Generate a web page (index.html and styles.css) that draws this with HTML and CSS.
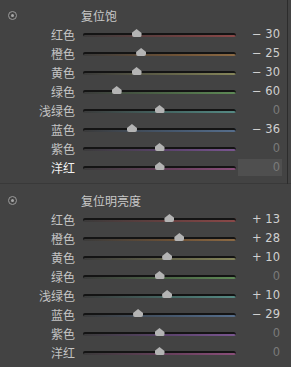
FILE: index.html
```html
<!DOCTYPE html>
<html lang="zh">
<head>
  <meta charset="UTF-8">
  <title>HSL</title>
  <link rel="stylesheet" href="styles.css">
</head>
<body>

<div class="panel">

  <!-- 饱和度 -->
  <div class="section">
    <div class="head">
      <span class="target"><b></b></span>
      <span class="title">复位饱</span>
    </div>
    <div class="row"><span class="label">红色</span><div class="track red"><i class="thumb" style="left:35%"></i></div><span class="val">− 30</span></div>
    <div class="row"><span class="label">橙色</span><div class="track orange"><i class="thumb" style="left:38%"></i></div><span class="val">− 25</span></div>
    <div class="row"><span class="label">黄色</span><div class="track yellow"><i class="thumb" style="left:35%"></i></div><span class="val">− 30</span></div>
    <div class="row"><span class="label">绿色</span><div class="track green"><i class="thumb" style="left:22%"></i></div><span class="val">− 60</span></div>
    <div class="row"><span class="label">浅绿色</span><div class="track aqua"><i class="thumb" style="left:50%"></i></div><span class="val zero">0</span></div>
    <div class="row"><span class="label">蓝色</span><div class="track blue"><i class="thumb" style="left:32%"></i></div><span class="val">− 36</span></div>
    <div class="row"><span class="label">紫色</span><div class="track purple"><i class="thumb" style="left:50%"></i></div><span class="val zero">0</span></div>
    <div class="row active"><span class="label">洋红</span><div class="track magenta"><i class="thumb" style="left:50%"></i></div><span class="val zero">0</span></div>
  </div>

  <!-- 明亮度 -->
  <div class="section">
    <div class="head">
      <span class="target"><b></b></span>
      <span class="title">复位明亮度</span>
    </div>
    <div class="row"><span class="label">红色</span><div class="track red"><i class="thumb" style="left:56.5%"></i></div><span class="val">+ 13</span></div>
    <div class="row"><span class="label">橙色</span><div class="track orange"><i class="thumb" style="left:63%"></i></div><span class="val">+ 28</span></div>
    <div class="row"><span class="label">黄色</span><div class="track yellow"><i class="thumb" style="left:55%"></i></div><span class="val">+ 10</span></div>
    <div class="row"><span class="label">绿色</span><div class="track green"><i class="thumb" style="left:50%"></i></div><span class="val zero">0</span></div>
    <div class="row"><span class="label">浅绿色</span><div class="track aqua"><i class="thumb" style="left:55%"></i></div><span class="val">+ 10</span></div>
    <div class="row"><span class="label">蓝色</span><div class="track blue"><i class="thumb" style="left:36%"></i></div><span class="val">− 29</span></div>
    <div class="row"><span class="label">紫色</span><div class="track purple"><i class="thumb" style="left:50%"></i></div><span class="val zero">0</span></div>
    <div class="row"><span class="label">洋红</span><div class="track magenta"><i class="thumb" style="left:50%"></i></div><span class="val zero">0</span></div>
  </div>

</div>

</body>
</html>
```

FILE: styles.css
```css
body {
  margin: 0;
  background: #434343;
  font-family: "Noto Sans CJK SC", "Noto Sans", sans-serif;
  font-size: 12px;
  color: #c4c4c4;
  overflow: hidden;
}

.panel {
  width: 291px;
  height: 367px;
}

.section {
  padding: 6px 0 6px 0;
  border-bottom: 1px solid #393939;
  position: relative;
}

.section:first-child::after {
  content: "";
  position: absolute;
  left: 287px;
  top: 0;
  bottom: -1px;
  width: 1px;
  background: #2c2c2c;
}

.section + .section {
  padding-top: 7px;
  border-bottom: none;
}

.head {
  height: 19px;
  display: flex;
  align-items: center;
}

.target {
  width: 7px;
  height: 7px;
  border: 1px solid #9a9a9a;
  border-radius: 50%;
  margin-left: 8px;
  display: flex;
  align-items: center;
  justify-content: center;
}

.target b {
  width: 3px;
  height: 3px;
  border-radius: 50%;
  background: #a8a8a8;
}

.title {
  margin-left: 64px;
  color: #c8c8c8;
}

.row {
  height: 19px;
  display: grid;
  grid-template-columns: 75px 153px 38px;
  column-gap: 8px;
  align-items: center;
}

.label {
  text-align: right;
  line-height: 19px;
}

.row.active .label {
  color: #f2f2f2;
}

.val {
  text-align: right;
  padding-right: 2px;
  line-height: 17px;
  height: 17px;
  margin-left: -6px;
  color: #d0d0d0;
  font-family: "DejaVu Sans", sans-serif;
  font-size: 11.5px;
}

.val.zero {
  color: #7a7a7a;
}

.row.active .val {
  background: #4f4f4f;
}

.track {
  position: relative;
  height: 4px;
  border-radius: 2px;
  margin-top: 1px;
  box-shadow: inset 0 2px 0 #141414;
}

.red     { background: linear-gradient(to right, #3a3a3a, #6a4040 60%, #8a4848); }
.orange  { background: linear-gradient(to right, #3a3a3a, #6e5236 60%, #8c6a44); }
.yellow  { background: linear-gradient(to right, #3a3a3a, #66664a 60%, #86865a); }
.green   { background: linear-gradient(to right, #3a3a3a, #4e6a48 60%, #5e8a56); }
.aqua    { background: linear-gradient(to right, #3a3a3a, #466a66 60%, #568a84); }
.blue    { background: linear-gradient(to right, #3a3a3a, #46586e 60%, #566e8c); }
.purple  { background: linear-gradient(to right, #3a3a3a, #5e4470 60%, #7a5690); }
.magenta { background: linear-gradient(to right, #3a3a3a, #6a405e 60%, #8a4e7a); }

.thumb {
  position: absolute;
  top: -4px;
  width: 10px;
  height: 8px;
  margin-left: -5px;
  background: #b4b4b4;
  border-radius: 0 0 2px 2px;
  clip-path: polygon(50% 0, 100% 50%, 100% 100%, 0 100%, 0 50%);
}
```
